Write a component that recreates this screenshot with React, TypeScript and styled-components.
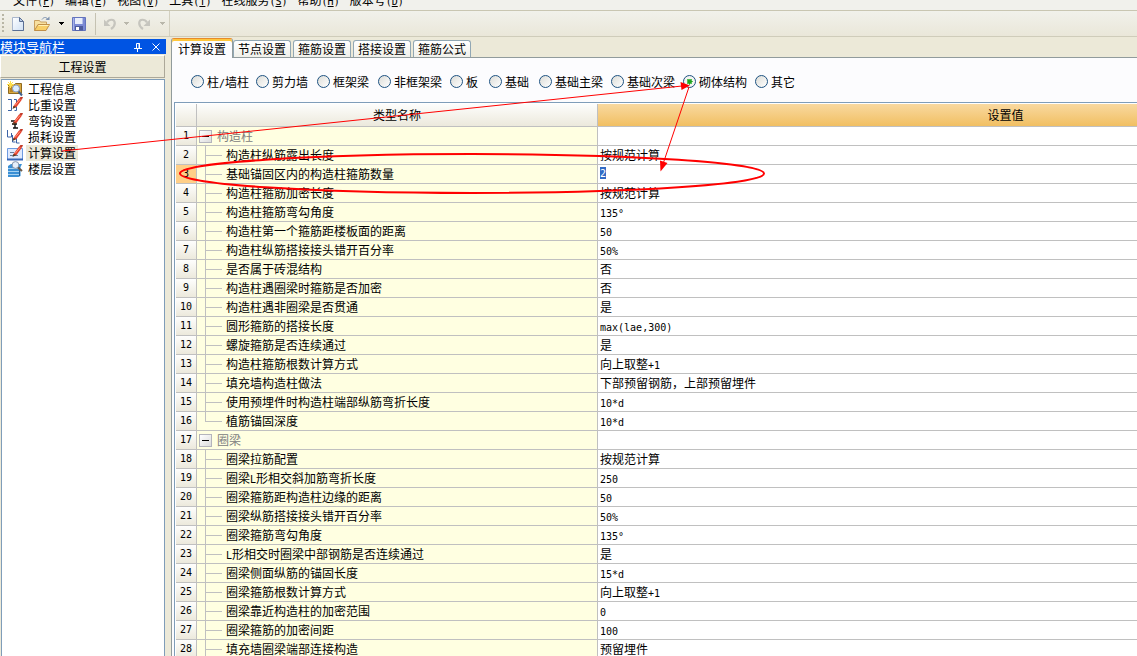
import React from 'react';
import styled, { createGlobalStyle, css } from 'styled-components';

const GlobalStyle = createGlobalStyle`
  * { box-sizing: border-box; }
  html, body, #root { height: 100%; }
  body {
    margin: 0;
    overflow: hidden;
    background: #ece9d8;
    color: #000;
    font: 12px/16px "Noto Sans CJK SC", sans-serif;
  }
  button, input { font: inherit; color: inherit; }
`;

const Window = styled.div`
  position: relative;
  display: flex;
  flex-direction: column;
  height: 100vh;
  overflow: hidden;
`;

const Half = styled.span`
  font-family: "DejaVu Sans Mono", monospace;
  font-size: 10px;
  line-height: 1;
`;

/* Latin runs take half the width of a Chinese character. */
function Text({ children }: { children: string }) {
  return (
    <>
      {children.split(/([\x20-\x7e°]+)/).map((part, i) =>
        i % 2 ? <Half key={i}>{part}</Half> : part
      )}
    </>
  );
}

/* ---------- menu and tool bars ---------- */

const MenuBar = styled.nav`
  display: flex;
  align-items: flex-end;
  gap: 10px;
  flex: none;
  height: 11px;
  padding: 0 0 2px 13px;
  overflow: hidden;
  background: #f1f1ec;
  border-bottom: 1px solid #c9c6b2;
`;

const MenuItem = styled.button`
  flex: none;
  padding: 0;
  border: 0;
  background: none;
  line-height: 16px;
  white-space: nowrap;
`;

const ToolBar = styled.div`
  display: flex;
  flex: none;
  height: 26px;
  border-bottom: 1px solid #cfccba;
  background: linear-gradient(#f1f1eb, #eae7d9);
`;

const ToolGroup = styled.div`
  display: flex;
  align-items: center;
  width: 170px;
  padding-left: 2px;
  border-right: 1px solid #d3d0c0;
`;

const Grip = styled.span`
  width: 2px;
  height: 20px;
  margin-right: 5px;
  background: repeating-linear-gradient(#b8b5a4 0 2px, transparent 2px 4px);
`;

const ToolButton = styled.button<{ $w: number }>`
  display: flex;
  align-items: center;
  justify-content: center;
  width: ${(p) => p.$w}px;
  height: 22px;
  padding: 0;
  border: 0;
  background: none;
`;

const Separator = styled.span`
  width: 1px;
  height: 22px;
  margin: 0 2px;
  background: #c5c2b2;
`;

const Caret = ({ color }: { color: string }) => (
  <svg width="5" height="3" viewBox="0 0 5 3" shapeRendering="crispEdges">
    <path d="M0 0h5v1H0zM1 1h3v1H1zM2 2h1v1H2z" fill={color} />
  </svg>
);

const NewIcon = () => (
  <svg width="14" height="16" viewBox="0 0 14 16">
    <defs>
      <linearGradient id="paper" x1="0" y1="0" x2="1" y2="1">
        <stop offset="0" stopColor="#fff" />
        <stop offset="1" stopColor="#cfe0f4" />
      </linearGradient>
    </defs>
    <path d="M1.500 1.500h7l4 4v9h-11z" fill="url(#paper)" stroke="#a9b6cc" />
    <path d="M12.500 5.500v9h-11" fill="none" stroke="#5a6f94" />
    <path d="M8.500 1.500v4h4z" fill="#b8cbe6" stroke="#5a6f94" />
  </svg>
);

const OpenIcon = () => (
  <svg width="18" height="16" viewBox="0 0 18 16">
    <path d="M1.500 14.500v-10h5l1 1.500h6v3" fill="#f7e0a0" stroke="#c9a060" />
    <path d="M1.500 14.500l3.500-6h11.500l-3.500 6z" fill="#f8cf68" stroke="#c08f48" />
    <path d="M5.500 9.500h10" stroke="#fff0b4" />
    <path d="M9 3.500c2-3 5-2.500 6 .5" fill="none" stroke="#7d92b0" />
    <path d="M12.500 4h4V.500z" fill="#7d92b0" />
  </svg>
);

const SaveIcon = () => (
  <svg width="16" height="16" viewBox="0 0 16 16">
    <path d="M1.500 1.500h13v13h-13z" fill="#7c8ad4" stroke="#6474bd" />
    <path d="M4 2h8v6H4z" fill="#e9eefb" />
    <path d="M11 2h1v6h-1z" fill="#b6c1ea" />
    <path d="M4 10h8v4.500H4z" fill="#4d5b9c" />
    <path d="M5 11h3v3H5z" fill="#fff" />
    <path d="M2 2h1v12H2z" fill="#a7b3ea" />
  </svg>
);

const UndoIcon = ({ flip }: { flip?: boolean }) => (
  <svg width="14" height="14" viewBox="0 0 14 14">
    <g transform={flip ? 'matrix(-1 0 0 1 14 0)' : undefined}>
      <path d="M4 5.500C6 2 11.500 1.500 11.800 6c0 2.500-1.500 4.500-3.800 6" fill="none" stroke="#c6c5be" strokeWidth="2.200" />
      <path d="M1 2.500v6.500h6.500z" fill="#c6c5be" />
    </g>
  </svg>
);

/* ---------- navigation pane ---------- */

const Body = styled.div`
  display: flex;
  flex: 1;
  min-height: 0;
`;

const Sidebar = styled.aside`
  display: flex;
  flex-direction: column;
  flex: none;
  width: 166px;
  padding-top: 2px;
`;

const PaneTitle = styled.header`
  display: flex;
  align-items: center;
  flex: none;
  height: 15px;
  padding-right: 1px;
  background: #0054e3;
  color: #fff;
  line-height: 15px;
  & > span { flex: 1; }
`;

const PaneName = styled.span`
  font-size: 13px;
`;

const PaneButton = styled.button`
  display: flex;
  justify-content: center;
  width: 18px;
  padding: 0;
  border: 0;
  background: none;
`;

const SectionButton = styled.button`
  flex: none;
  height: 23px;
  margin: 1px 1px 1px 0;
  padding: 0;
  border: 1px solid;
  border-color: #fff #aca899 #aca899 #fff;
  background: #ece9d8;
  line-height: 20px;
`;

const NavList = styled.ul`
  flex: 1;
  margin: 0 1px 0 1px;
  padding: 1px 0 0 5px;
  border: solid #7f9db9;
  border-width: 1px 1px 0;
  background: #fff;
  list-style: none;
`;

const NavItem = styled.li`
  display: flex;
  align-items: center;
  height: 16px;
  gap: 3px;
`;

const NavButton = styled.button<{ $active?: boolean }>`
  height: 16px;
  padding: 0 2px;
  border: 0;
  background: ${(p) => (p.$active ? '#ece9d8' : 'none')};
  line-height: 16px;
`;

const Pencil = () => (
  <>
    <path d="M6.500 9L12 1.500l3 1L9.500 10l-3.500 1z" fill="#e8402c" />
    <path d="M8 8.500L13 2.500" stroke="#ff9a80" />
    <path d="M12 1.500L13.500 0H16l-1 2.500z" fill="#c23a28" />
    <path d="M5.500 12l1-3l3 1z" fill="#5a3a20" />
  </>
);

const navIcons: Record<string, React.ReactNode> = {
  info: (
    <>
      <path d="M1.500 3.500h6l1-1h6v10h-13z" fill="#dba93f" stroke="#8f6a20" />
      <path d="M3 6h10v5H3z" fill="#b98424" />
      <path d="M3.500 0v7M0 3.500h7M1 1l5 5M6 1L1 6" stroke="#ffe04a" />
      <circle cx="9" cy="7.500" r="3.500" fill="#dcecff" stroke="#8ba0c4" />
      <path d="M11.500 10.500l3.500 4" stroke="#40618f" strokeWidth="2" />
    </>
  ),
  weight: (
    <>
      <path d="M1 2.500h3.500v11H1M9.500 6V2.500H7M7.500 13.500h2v-4" fill="none" stroke="#3b62a5" />
      <Pencil />
    </>
  ),
  hook: (
    <>
      <path d="M4 8h4v6.500M5 11h5M6 15h5" fill="none" stroke="#111" strokeWidth="1.400" />
      <Pencil />
    </>
  ),
  loss: (
    <>
      <path d="M.5 1v7h4V4M5.500 6v7h3M9.500 9v5h3" fill="none" stroke="#3b62a5" />
      <Pencil />
    </>
  ),
  calc: (
    <>
      <path d="M.5 3.500h15v11H.5z" fill="#dfeaff" stroke="#6d9ae0" />
      <path d="M0 14.500h16" stroke="#3766b8" strokeWidth="2" />
      <path d="M3 7.500h4M3 10.500h8" stroke="#6c7f9d" />
      <Pencil />
    </>
  ),
  floor: (
    <>
      <path d="M1 5l3-2h11l-1.500 3v9l-2 1H1z" fill="#3a8fd4" />
      <path d="M1 7.500h11M1 10.500h11M1 13.500h11" stroke="#a6d2f2" />
      <path d="M12.500 6v9" stroke="#235f98" />
      <circle cx="8.500" cy="4" r="3.400" fill="#e6f0fb" stroke="#8595ab" />
      <path d="M11 6.500l4 3.500" stroke="#6b5a4a" strokeWidth="2" />
    </>
  ),
};

const navItems = [
  { icon: 'info', label: '工程信息' },
  { icon: 'weight', label: '比重设置' },
  { icon: 'hook', label: '弯钩设置' },
  { icon: 'loss', label: '损耗设置' },
  { icon: 'calc', label: '计算设置', active: true },
  { icon: 'floor', label: '楼层设置' },
];

/* ---------- settings page ---------- */

const Main = styled.main`
  display: flex;
  flex-direction: column;
  flex: 1;
  min-width: 0;
  padding: 1px 0 0 5px;
`;

const Tabs = styled.div`
  display: flex;
  align-items: flex-end;
  flex: none;
  gap: 2px;
  height: 20px;
`;

const Tab = styled.button<{ $active?: boolean }>`
  height: 18px;
  width: 58px;
  padding: 0;
  border: 1px solid #91a7b4;
  border-bottom-color: #919b9c;
  border-radius: 3px 3px 0 0;
  background: linear-gradient(#fff, #f0f0ea);
  line-height: 16px;
  ${(p) =>
    p.$active &&
    css`
      width: 62px;
      height: 20px;
      margin-right: -2px;
      border-color: #e68b2c #919b9c #fcfcfe;
      border-bottom: 0;
      box-shadow: inset 0 2px #ffc73c;
      background: #fcfcfe;
      line-height: 18px;
    `}
`;

const Panel = styled.section`
  display: flex;
  flex-direction: column;
  flex: 1;
  min-height: 0;
  padding-left: 2px;
  border-left: 1px solid #919b9c;
  background: #fcfcfe;
`;

const PanelEdge = styled.div`
  flex: none;
  height: 1px;
  margin: -1px 0 0 61px;
  background: #919b9c;
`;

const Radios = styled.div`
  display: grid;
  grid-template-columns: 65px 61px 61px 72px 39px 50px repeat(4, 72px);
  align-items: center;
  flex: none;
  height: 44px;
  padding: 3px 0 0 17px;
`;

const RadioLabel = styled.label`
  display: flex;
  align-items: center;
  gap: 3px;
  white-space: nowrap;
`;

const Radio = styled.input`
  appearance: none;
  flex: none;
  width: 13px;
  height: 13px;
  margin: 0;
  border: 1px solid #1d5281;
  border-radius: 50%;
  background: linear-gradient(135deg, #dcdcd7, #fff);
  &:checked {
    background: radial-gradient(circle, #21a121 0 2px, #55c055 2px 3px, #f4f4f1 3px);
  }
`;

const GridBox = styled.div`
  flex: 1;
  min-height: 0;
  overflow: hidden;
  padding: 1px 0 0 1px;
  border: solid #7f9db9;
  border-width: 1px 0 0 1px;
  background: #fff;
`;

const Grid = styled.table`
  table-layout: fixed;
  width: 1238px;
  border-collapse: separate;
  border-spacing: 0;
`;

const cell = css`
  padding: 0;
  border: solid #c0c0c0;
  border-width: 0 1px 1px 0;
  font-weight: normal;
  text-align: left;
  vertical-align: top;
  white-space: nowrap;
`;

const HeadCell = styled.th<{ $active?: boolean }>`
  ${cell}
  height: 23px;
  text-align: center;
  line-height: 22px;
  background: ${(p) =>
    p.$active ? 'linear-gradient(#f9d9a0, #f1bf62)' : 'linear-gradient(#fdfdfc, #ece9dc)'};
`;

const NumberCell = styled.th<{ $active?: boolean }>`
  ${cell}
  text-align: center;
  line-height: 18px;
  font-family: "DejaVu Sans Mono", monospace;
  font-size: 10px;
  background: ${(p) => (p.$active ? '#ffcf88' : 'linear-gradient(#fefefd, #ece9dc)')};
`;

const NameCell = styled.td`
  ${cell}
  background: #ffffe1;
`;

const ValueCell = styled.td`
  ${cell}
  background: #fff;
`;

const Value = styled.div`
  display: flow-root;
  height: 18px;
  padding-left: 2px;
  line-height: 17px;
`;

const Name = styled.div<{ $group?: boolean }>`
  display: flex;
  align-items: center;
  height: 18px;
  padding-left: ${(p) => (p.$group ? 2 : 8)}px;
  gap: ${(p) => (p.$group ? 5 : 4)}px;
  color: ${(p) => (p.$group ? '#808080' : '#000')};
  line-height: 18px;
`;

const Branch = styled.span<{ $last?: boolean }>`
  align-self: flex-start;
  width: 17px;
  height: ${(p) => (p.$last ? 10 : 19)}px;
  margin-bottom: -1px;
  border-left: 1px solid #c0c0c0;
  background: linear-gradient(#c0c0c0, #c0c0c0) 0 9px / 100% 1px no-repeat;
`;

const Expander = styled.button`
  display: flex;
  align-items: center;
  justify-content: center;
  width: 13px;
  height: 13px;
  padding: 0;
  border: 1px solid #b4b4bc;
  background: linear-gradient(135deg, #fff, #dcdcdc);
  &::before {
    content: "";
    width: 7px;
    height: 1px;
    background: #000;
  }
`;

const Editor = styled.input`
  display: block;
  width: 6px;
  height: 12px;
  margin-top: 2px;
  padding: 0;
  border: 0;
  outline: 0;
  background: #316ac5;
  color: #fff;
  font-family: "DejaVu Sans Mono", monospace;
  font-size: 10px;
`;

const Markup = styled.svg`
  position: absolute;
  top: 0;
  left: 0;
  pointer-events: none;
`;

const menus = ['文件(F)', '编辑(E)', '视图(V)', '工具(T)', '在线服务(S)', '帮助(H)', '版本号(D)'];
const tabs = ['计算设置', '节点设置', '箍筋设置', '搭接设置', '箍筋公式'];
const members = ['柱/墙柱', '剪力墙', '框架梁', '非框架梁', '板', '基础', '基础主梁', '基础次梁', '砌体结构', '其它'];

type Row = { name: string; value?: string; group?: boolean; last?: boolean; editing?: boolean };

const rows: Row[] = [
  { name: '构造柱', group: true },
  { name: '构造柱纵筋露出长度', value: '按规范计算' },
  { name: '基础锚固区内的构造柱箍筋数量', value: '2', editing: true },
  { name: '构造柱箍筋加密长度', value: '按规范计算' },
  { name: '构造柱箍筋弯勾角度', value: '135°' },
  { name: '构造柱第一个箍筋距楼板面的距离', value: '50' },
  { name: '构造柱纵筋搭接接头错开百分率', value: '50%' },
  { name: '是否属于砖混结构', value: '否' },
  { name: '构造柱遇圈梁时箍筋是否加密', value: '否' },
  { name: '构造柱遇非圈梁是否贯通', value: '是' },
  { name: '圆形箍筋的搭接长度', value: 'max(lae,300)' },
  { name: '螺旋箍筋是否连续通过', value: '是' },
  { name: '构造柱箍筋根数计算方式', value: '向上取整+1' },
  { name: '填充墙构造柱做法', value: '下部预留钢筋，上部预留埋件' },
  { name: '使用预埋件时构造柱端部纵筋弯折长度', value: '10*d' },
  { name: '植筋锚固深度', value: '10*d', last: true },
  { name: '圈梁', group: true },
  { name: '圈梁拉筋配置', value: '按规范计算' },
  { name: '圈梁L形相交斜加筋弯折长度', value: '250' },
  { name: '圈梁箍筋距构造柱边缘的距离', value: '50' },
  { name: '圈梁纵筋搭接接头错开百分率', value: '50%' },
  { name: '圈梁箍筋弯勾角度', value: '135°' },
  { name: 'L形相交时圈梁中部钢筋是否连续通过', value: '是' },
  { name: '圈梁侧面纵筋的锚固长度', value: '15*d' },
  { name: '圈梁箍筋根数计算方式', value: '向上取整+1' },
  { name: '圈梁靠近构造柱的加密范围', value: '0' },
  { name: '圈梁箍筋的加密间距', value: '100' },
  { name: '填充墙圈梁端部连接构造', value: '预留埋件' },
];

export default function App() {
  return (
    <Window>
      <GlobalStyle />
      <MenuBar>
        {menus.map((m) => (
          <MenuItem key={m}>
            {m.slice(0, -3)}
            <Half>
              (<u>{m.slice(-2, -1)}</u>)
            </Half>
          </MenuItem>
        ))}
      </MenuBar>
      <ToolBar>
        <ToolGroup>
          <Grip />
          <ToolButton $w={18} aria-label="新建"><NewIcon /></ToolButton>
          <ToolButton $w={30} aria-label="打开"><OpenIcon /></ToolButton>
          <ToolButton $w={8} aria-label="最近文件"><Caret color="#000" /></ToolButton>
          <ToolButton $w={28} aria-label="保存"><SaveIcon /></ToolButton>
          <Separator />
          <ToolButton $w={24} aria-label="撤销"><UndoIcon /></ToolButton>
          <ToolButton $w={8} aria-label="撤销列表"><Caret color="#b9b7ab" /></ToolButton>
          <ToolButton $w={28} aria-label="恢复"><UndoIcon flip /></ToolButton>
          <ToolButton $w={8} aria-label="恢复列表"><Caret color="#b9b7ab" /></ToolButton>
        </ToolGroup>
      </ToolBar>
      <Body>
        <Sidebar>
          <PaneTitle>
            <PaneName>模块导航栏</PaneName>
            <PaneButton aria-label="固定">
              <svg width="8" height="10" viewBox="0 0 8 10">
                <path d="M2.500 6V1.500h3V6M5 1v5M0 6.500h8M3.500 7v3" fill="none" stroke="#fff" />
              </svg>
            </PaneButton>
            <PaneButton aria-label="关闭">
              <svg width="8" height="8" viewBox="0 0 8 8">
                <path d="M.5 .5l7 7M7.500 .5l-7 7" stroke="#fff" />
              </svg>
            </PaneButton>
          </PaneTitle>
          <SectionButton>工程设置</SectionButton>
          <NavList>
            {navItems.map((n) => (
              <NavItem key={n.label}>
                <svg width="16" height="16" viewBox="0 0 16 16">{navIcons[n.icon]}</svg>
                <NavButton $active={n.active}>{n.label}</NavButton>
              </NavItem>
            ))}
          </NavList>
        </Sidebar>
        <Main>
          <Tabs role="tablist">
            {tabs.map((t, i) => (
              <Tab key={t} role="tab" aria-selected={i === 0} $active={i === 0}>{t}</Tab>
            ))}
          </Tabs>
          <PanelEdge />
          <Panel>
            <Radios>
              {members.map((m) => (
                <RadioLabel key={m}>
                  <Radio type="radio" name="member" defaultChecked={m === '砌体结构'} />
                  <span><Text>{m}</Text></span>
                </RadioLabel>
              ))}
            </Radios>
            <GridBox>
              <Grid>
                <colgroup>
                  <col style={{ width: 21 }} />
                  <col style={{ width: 401 }} />
                  <col />
                </colgroup>
                <thead>
                  <tr>
                    <HeadCell />
                    <HeadCell>类型名称</HeadCell>
                    <HeadCell $active>设置值</HeadCell>
                  </tr>
                </thead>
                <tbody>
                  {rows.map((r, i) => (
                    <tr key={i}>
                      <NumberCell scope="row" $active={r.editing}>{i + 1}</NumberCell>
                      <NameCell>
                        <Name $group={r.group}>
                          {r.group ? <Expander aria-label="折叠" /> : <Branch $last={r.last} />}
                          <span><Text>{r.name}</Text></span>
                        </Name>
                      </NameCell>
                      <ValueCell>
                        <Value>
                          {r.editing ? (
                            <Editor aria-label={r.name} defaultValue={r.value} />
                          ) : (
                            <Text>{r.value ?? ''}</Text>
                          )}
                        </Value>
                      </ValueCell>
                    </tr>
                  ))}
                </tbody>
              </Grid>
            </GridBox>
          </Panel>
        </Main>
      </Body>
      <Markup width="800" height="220" viewBox="0 0 800 220" fill="none" stroke="#f00">
        <path d="M62 151L682 86" />
        <path d="M690 85.500l-9.500-3.500l1 8z" fill="#f00" stroke="none" />
        <path d="M689 87L663 164" />
        <path d="M660.500 171.500l-.5-11l7.500 2.500z" fill="#f00" stroke="none" />
        <ellipse cx="472" cy="173.500" rx="292" ry="19.500" strokeWidth="2" />
      </Markup>
    </Window>
  );
}
